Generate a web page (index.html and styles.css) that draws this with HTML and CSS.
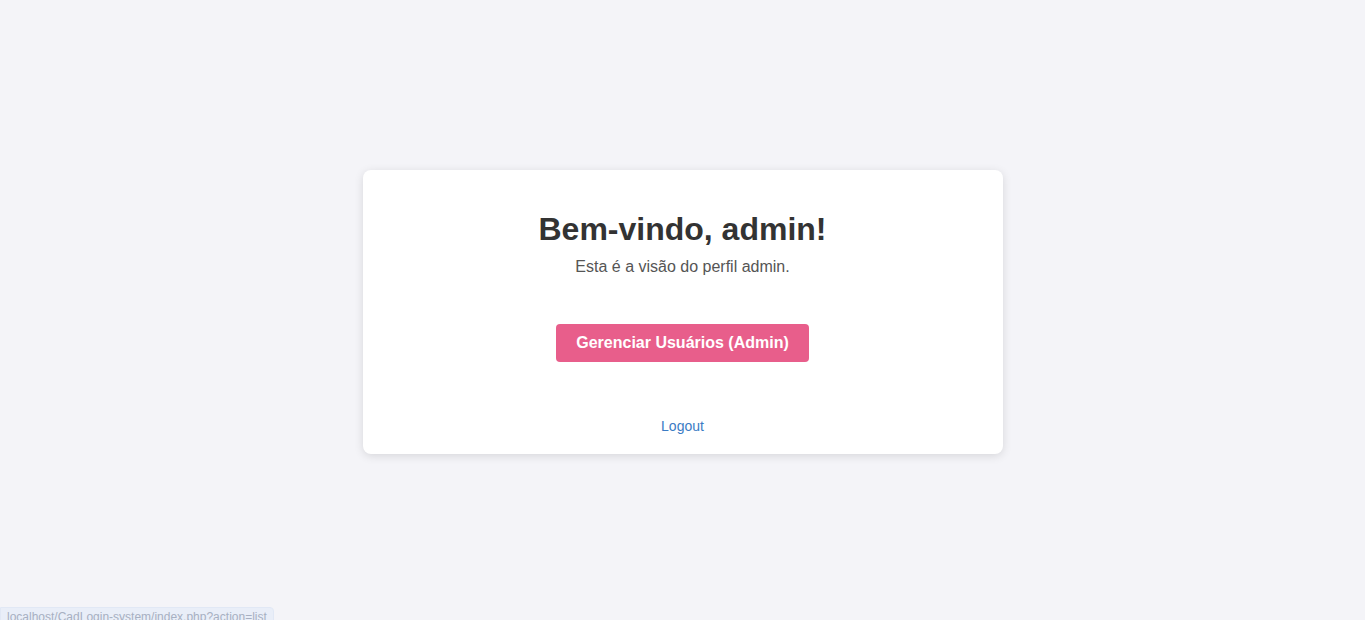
FILE: index.html
```html
<!DOCTYPE html>
<html lang="pt-BR">
<head>
<meta charset="utf-8">
<title>Painel</title>
<link rel="stylesheet" href="styles.css">
</head>
<body>
<main class="card">
  <h1 class="title">Bem-vindo, admin!</h1>
  <p class="subtitle">Esta é a visão do perfil admin.</p>
  <a class="btn" href="#">Gerenciar Usuários (Admin)</a>
  <a class="logout" href="#">Logout</a>
</main>
<div class="status">localhost/CadLogin-system/index.php?action=list</div>
</body>
</html>
```
FILE: styles.css
```css
html, body {
  margin: 0;
  padding: 0;
}
body {
  background: #f4f4f8;
  font-family: "Liberation Sans", Arial, sans-serif;
  height: 100vh;
  display: flex;
  align-items: center;
  justify-content: center;
}
.card {
  width: 640px;
  box-sizing: border-box;
  background: #fff;
  border-radius: 8px;
  box-shadow: 0 2px 10px rgba(0, 0, 0, 0.12);
  padding: 41px 40px 20px;
  display: flex;
  flex-direction: column;
  align-items: center;
  text-align: center;
  margin-top: 3px;
}
.title {
  margin: 0 0 10px;
  font-size: 32px;
  font-weight: bold;
  color: #333;
}
.subtitle {
  margin: 0;
  font-size: 16px;
  color: #555;
}
.btn {
  margin-top: 48px;
  display: inline-block;
  background: #e85e8b;
  color: #fff;
  font-weight: bold;
  font-size: 16px;
  text-decoration: none;
  padding: 10px 20px;
  border-radius: 4px;
}
.logout {
  margin-top: 56px;
  font-size: 14px;
  color: #3b7bc4;
  text-decoration: none;
}
.status {
  position: fixed;
  left: 0;
  bottom: -7px;
  height: 18px;
  line-height: 18px;
  padding: 0 6px;
  background: #e9eef8;
  border: 1px solid #e1e8f5;
  border-radius: 0 4px 0 0;
  font-size: 12px;
  color: #a7b0c2;
  font-family: "Liberation Sans", Arial, sans-serif;
}
```
